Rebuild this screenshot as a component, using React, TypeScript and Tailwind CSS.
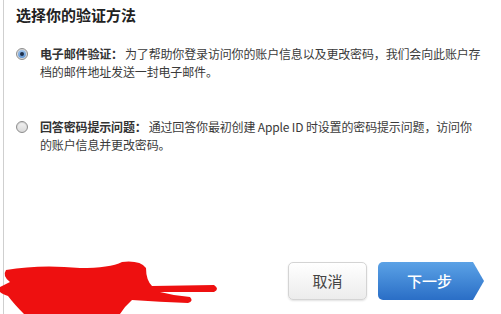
import React from 'react';

const font = { fontFamily: '"Noto Sans CJK SC", "Noto Sans", sans-serif' };

function Radio({ checked }: { checked?: boolean }) {
  return (
    <span className="mt-[3px] flex h-[12px] w-[12px] shrink-0 items-center justify-center rounded-full border border-[#8d8d8d] bg-gradient-to-b from-[#f4f4f4] to-[#d9d9d9] shadow-[inset_0_1px_1px_rgba(0,0,0,0.15)]">
      {checked && (
        <span className="flex h-[8px] w-[8px] items-center justify-center rounded-full bg-gradient-to-b from-[#9fc3ea] to-[#5f95d3]">
          <span className="h-[4px] w-[4px] rounded-full bg-[#1d2f4a]" />
        </span>
      )}
    </span>
  );
}

function Option({ checked, label, lines }: { checked?: boolean; label: string; lines: string[] }) {
  return (
    <div className="flex gap-[12px]">
      <Radio checked={checked} />
      <div className="text-[12px] leading-[18px] tracking-[-0.15px] text-[#3a3a3a] whitespace-nowrap">
        <div>
          <span className="font-bold text-[#333]">{label}</span>
          <span className="ml-[2px]">{lines[0]}</span>
        </div>
        <div>{lines[1]}</div>
      </div>
    </div>
  );
}

function Scribble() {
  return (
    <svg className="absolute left-0 bottom-0" width="230" height="56" viewBox="0 258 230 56">
      <path
        d="M6 270 Q 40 264 80 268 Q 110 268 122 262 Q 140 260 146 268 Q 146 280 152 286 L 214 285 Q 220 289 214 292 L 160 292 Q 175 296 190 297 Q 194 301 188 303 Q 160 302 132 300 Q 125 306 120 314 L 24 314 Q 14 304 8 296 Q 2 294 0 292 L 0 287 Q 6 284 10 282 Q 2 276 6 270 Z"
        fill="#ee1010"
      />
    </svg>
  );
}

export default function App() {
  return (
    <div className="relative h-[314px] w-[501px] overflow-hidden bg-white" style={font}>
      <div className="ml-[3px] flex h-full flex-col border-l border-[#cfcfcf] pl-[12px]">
        <h1 className="mt-[5px] text-[15px] font-bold leading-[20px] text-[#222]">选择你的验证方法</h1>

        <div className="mt-[20px] flex flex-col gap-[37px]">
          <Option
            checked
            label="电子邮件验证："
            lines={['为了帮助你登录访问你的账户信息以及更改密码，我们会向此账户存', '档的邮件地址发送一封电子邮件。']}
          />
          <Option
            label="回答密码提示问题："
            lines={['通过回答你最初创建 Apple ID 时设置的密码提示问题，访问你', '的账户信息并更改密码。']}
          />
        </div>

        <div className="mt-auto mb-[14px] flex justify-end gap-[11px] pr-[17px]">
          <button className="h-[38px] w-[79px] rounded-[5px] border border-[#d4d4d4] bg-gradient-to-b from-white to-[#ececec] text-[15px] text-[#444] shadow-[0_1px_2px_rgba(0,0,0,0.12)]">
            取消
          </button>
          <button className="flex h-[38px] items-stretch text-[15px] font-medium text-white">
            <span className="flex w-[95px] items-center justify-center rounded-l-[5px] bg-gradient-to-b from-[#5ba2e6] to-[#2a6ec6] pl-[8px]">
              下一步
            </span>
            <span className="w-[11px] bg-gradient-to-b from-[#5ba2e6] to-[#2a6ec6] [clip-path:polygon(0_0,100%_50%,0_100%)]" />
          </button>
        </div>
      </div>
      <Scribble />
    </div>
  );
}
